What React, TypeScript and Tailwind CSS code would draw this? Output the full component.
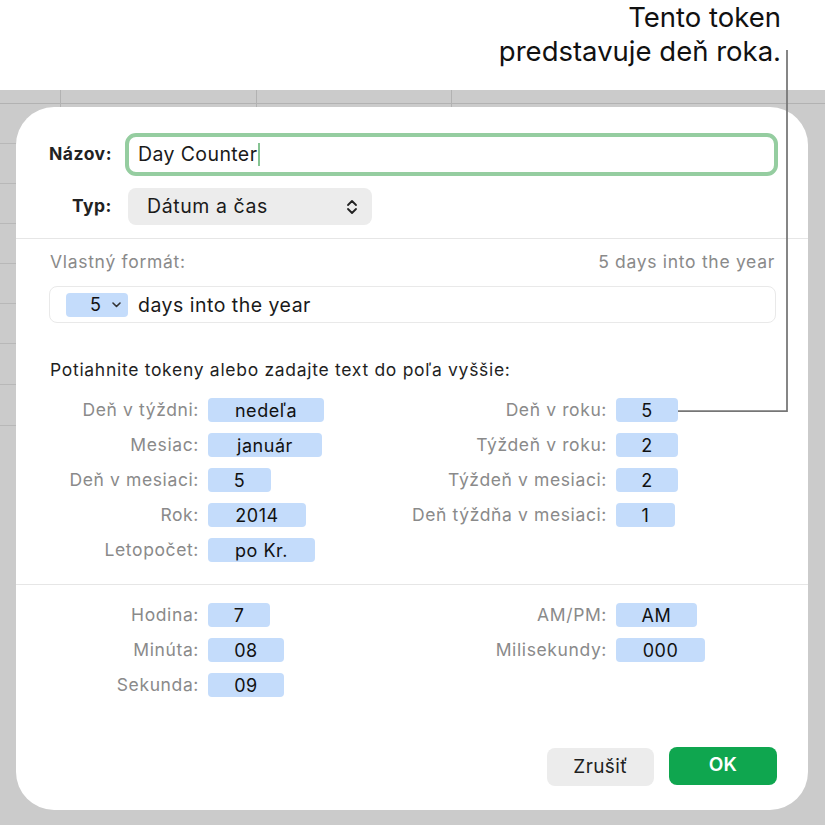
import React from 'react';

const font = { fontFamily: 'Inter, "Noto Sans", sans-serif' };

type Tok = { label: string; value: string; w: string };

const dateLeft: Tok[] = [
  { label: 'Deň v týždni:', value: 'nedeľa', w: 'w-[116px]' },
  { label: 'Mesiac:', value: 'január', w: 'w-[114px]' },
  { label: 'Deň v mesiaci:', value: '5', w: 'w-[63px]' },
  { label: 'Rok:', value: '2014', w: 'w-[98px]' },
  { label: 'Letopočet:', value: 'po Kr.', w: 'w-[107px]' },
];

const dateRight: Tok[] = [
  { label: 'Deň v roku:', value: '5', w: 'w-[62px]' },
  { label: 'Týždeň v roku:', value: '2', w: 'w-[62px]' },
  { label: 'Týždeň v mesiaci:', value: '2', w: 'w-[62px]' },
  { label: 'Deň týždňa v mesiaci:', value: '1', w: 'w-[59px]' },
];

const timeLeft: Tok[] = [
  { label: 'Hodina:', value: '7', w: 'w-[62px]' },
  { label: 'Minúta:', value: '08', w: 'w-[76px]' },
  { label: 'Sekunda:', value: '09', w: 'w-[76px]' },
];

const timeRight: Tok[] = [
  { label: 'AM/PM:', value: 'AM', w: 'w-[81px]' },
  { label: 'Milisekundy:', value: '000', w: 'w-[89px]' },
];

function TokenRow({ t }: { t: Tok }) {
  return (
    <div className="flex items-center gap-[9px] h-[24px]">
      <div className="w-[183px] flex-none flex justify-end">
        <span className="text-[17.5px] tracking-[0.035em] text-[#8a8a8a] whitespace-nowrap">{t.label}</span>
      </div>
      <span
        className={`${t.w} h-[24px] rounded-[4px] bg-[#c4dcfb] flex items-center justify-center text-[18px] tracking-[0.03em] text-[#111]`}
      >
        {t.value}
      </span>
    </div>
  );
}

function TokenColumns({ left, right }: { left: Tok[]; right: Tok[] }) {
  return (
    <div className="flex">
      <div className="w-[408px] flex flex-col gap-[11px]">
        {left.map((t) => (
          <TokenRow key={t.label} t={t} />
        ))}
      </div>
      <div className="flex flex-col gap-[11px]">
        {right.map((t) => (
          <TokenRow key={t.label} t={t} />
        ))}
      </div>
    </div>
  );
}

export default function App() {
  return (
    <div className="relative w-[825px] h-[827px] bg-white flex flex-col overflow-hidden" style={font}>
      {/* callout text */}
      <div className="h-[90px] pr-[44px] text-right text-[27.5px] leading-[34px] text-[#111]">
        <p>Tento token</p>
        <p>predstavuje deň roka.</p>
      </div>

      {/* spreadsheet backdrop */}
      <div className="relative flex-1 bg-[#cbcbcb] pl-4 pr-[17px] pt-[17px] pb-[15px]">
        <svg className="absolute inset-0" width="825" height="735">
          <line x1="0" y1="13.5" x2="825" y2="13.5" stroke="#b2b2b2" strokeWidth="1" />
          <line x1="60.5" y1="0" x2="60.5" y2="17" stroke="#b2b2b2" strokeWidth="1" />
          <line x1="256.5" y1="0" x2="256.5" y2="17" stroke="#b2b2b2" strokeWidth="1" />
          <line x1="451.5" y1="0" x2="451.5" y2="17" stroke="#b2b2b2" strokeWidth="1" />
          {[53, 93, 133, 173, 213, 253, 294, 335].map((y) => (
            <line key={y} x1="0" y1={y + 0.5} x2="16" y2={y + 0.5} stroke="#b8b8b8" strokeWidth="1" />
          ))}
        </svg>

        {/* dialog */}
        <div className="relative h-[703px] bg-white rounded-[38px] flex flex-col">
          {/* name */}
          <div className="flex items-center mt-[26px]">
            <span className="w-[96px] text-right text-[17.5px] tracking-[0.03em] font-bold text-[#222]">Názov:</span>
            <div className="ml-[13px] w-[653px] h-[43px] border-[4px] border-[#95cda0] rounded-[11px] flex items-center pl-[9px] text-[19.5px] tracking-[0.02em] text-[#1a1a1a]">
              Day Counter
              <span className="w-[2px] h-[23px] bg-[#86c493] ml-[1px]" />
            </div>
          </div>

          {/* type */}
          <div className="flex items-center mt-[12px]">
            <span className="w-[96px] text-right text-[17.5px] tracking-[0.03em] font-bold text-[#222]">Typ:</span>
            <div className="ml-[16px] w-[244px] h-[37px] rounded-[8px] bg-[#ececec] flex items-center justify-between pl-[19px] pr-[14px] text-[19.5px] tracking-[0.03em] text-[#1a1a1a]">
              Dátum a čas
              <svg width="12" height="16" viewBox="0 0 12 16" fill="none" stroke="#222" strokeWidth="1.8" strokeLinecap="round" strokeLinejoin="round">
                <path d="M2 6 L6 2 L10 6" />
                <path d="M2 10 L6 14 L10 10" />
              </svg>
            </div>
          </div>

          <div className="mt-[13px] h-px bg-[#e6e6e6]" />

          {/* custom format */}
          <div className="flex justify-between px-[34px] pr-[33px] mt-[13px] text-[17.5px] tracking-[0.04em] leading-[20px] text-[#8a8a8a]">
            <span>Vlastný formát:</span>
            <span>5 days into the year</span>
          </div>
          <div className="mx-[33px] mr-[32px] mt-[14px] h-[37px] rounded-[8px] border border-[#e9e9e9] flex items-center pl-[16px]">
            <span className="w-[62px] h-[24px] rounded-[4px] bg-[#c4dcfb] flex items-center pl-[24px] gap-[11px] text-[18px] text-[#111]">
              5
              <svg width="9" height="6" viewBox="0 0 9 6" fill="none" stroke="#333" strokeWidth="1.6" strokeLinecap="round" strokeLinejoin="round">
                <path d="M1 1 L4.5 4.5 L8 1" />
              </svg>
            </span>
            <span className="ml-[10px] text-[19.5px] tracking-[0.025em] text-[#1a1a1a] pt-[2px]">days into the year</span>
          </div>

          <p className="mt-[37px] pl-[34px] text-[17.5px] tracking-[0.04em] leading-[20px] text-[#1f1f1f]">
            Potiahnite tokeny alebo zadajte text do poľa vyššie:
          </p>

          <div className="mt-[18px]">
            <TokenColumns left={dateLeft} right={dateRight} />
          </div>

          <div className="mt-[22px] h-px bg-[#e6e6e6]" />

          <div className="mt-[18px]">
            <TokenColumns left={timeLeft} right={timeRight} />
          </div>

          <div className="mt-auto mb-[24px] mr-[31px] flex justify-end items-center gap-[15px]">
            <button className="w-[107px] h-[38px] rounded-[8px] bg-[#ececec] text-[19px] tracking-[0.02em] text-[#1f1f1f]">
              Zrušiť
            </button>
            <button className="w-[108px] h-[38px] -mt-[3px] rounded-[8px] bg-[#0fa64f] text-[19px] font-semibold tracking-[0.02em] text-white">
              OK
            </button>
          </div>
        </div>
      </div>

      <div className="h-[2px] bg-white" />

      {/* callout leader line */}
      <svg className="absolute left-0 top-0 pointer-events-none" width="825" height="827">
        <path d="M787 50 L787 411 L678 411" fill="none" stroke="#767676" strokeWidth="1.75" />
      </svg>
    </div>
  );
}
